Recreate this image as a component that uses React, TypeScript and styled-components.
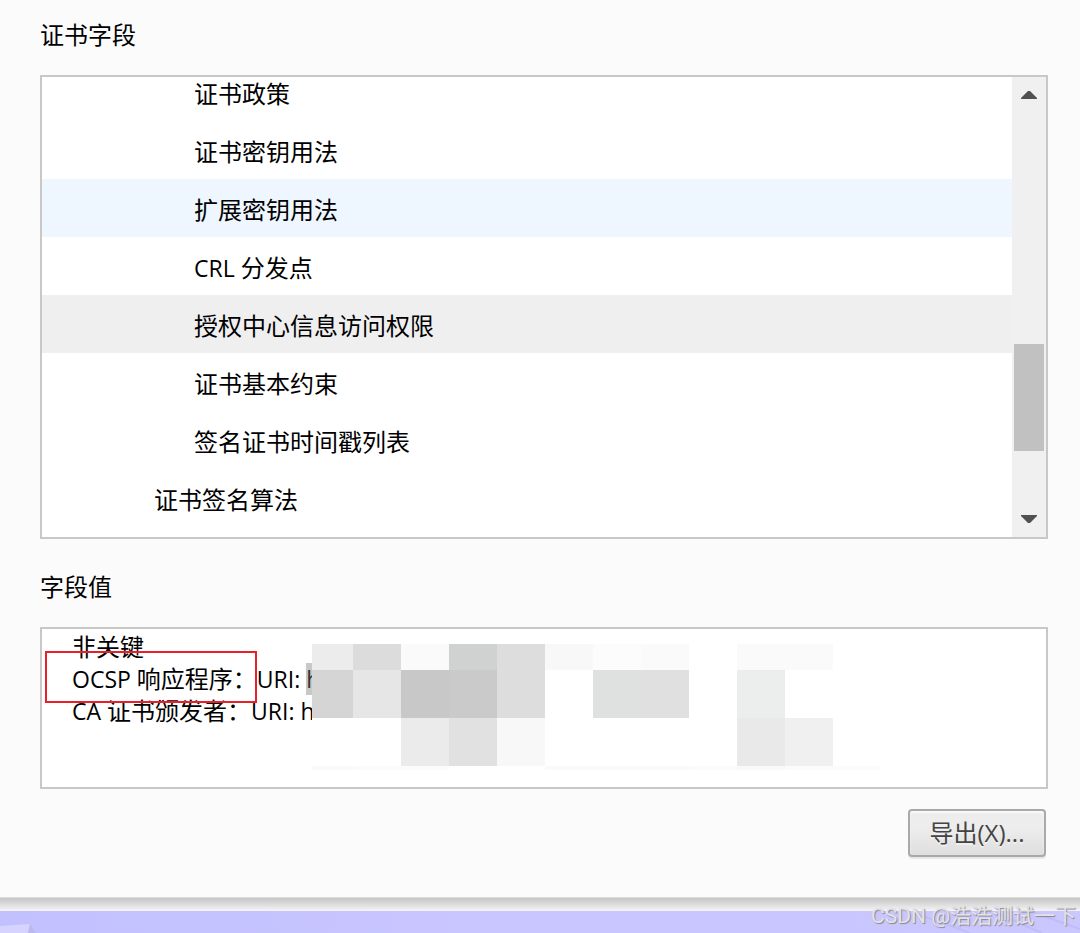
import React from 'react';
import styled, { createGlobalStyle } from 'styled-components';

const GlobalStyle = createGlobalStyle`
  *, *::before, *::after { box-sizing: border-box; }
  body {
    margin: 0;
    background: #c7c4fe;
    color: #000;
    font: 24px/32px "Open Sans", "Noto Sans CJK SC", sans-serif;
  }
`;

const Page = styled.div`
  min-height: 100vh;
  display: flex;
  flex-direction: column;
`;

const Panel = styled.main`
  display: flex;
  flex-direction: column;
  padding: 19px 32px 40px 40px;
  background: #fbfbfb;
  border-bottom: 1px solid #dcdddc;
`;

const Label = styled.label`
  display: block;
  line-height: 32px;
  margin-bottom: 24px;
`;

const Latin = styled.span`
  font-size: 23px;
  line-height: 1;
`;

const TreeFrame = styled.div`
  display: flex;
  height: 464px;
  margin-bottom: 32px;
  border: 2px solid #c8c8c8;
  background: #fff;
  overflow: hidden;
`;

const Tree = styled.ul`
  flex: 1;
  min-width: 0;
  margin: -14px 0 0;
  padding: 0;
  list-style: none;
`;

const toneColors = { plain: 'transparent', hover: '#eef6ff', selected: '#efefef' };

const TreeRow = styled.li<{ $depth: number; $tone: keyof typeof toneColors }>`
  height: 58px;
  line-height: 54px;
  padding-top: 4px;
  padding-left: ${({ $depth }) => $depth * 40 - 8}px;
  background: ${({ $tone }) => toneColors[$tone]};
`;

const Scrollbar = styled.div`
  display: flex;
  flex-direction: column;
  align-items: center;
  width: 34px;
  padding: 14px 0;
  background: #f0f0f0;
`;

const Arrow = styled.svg`
  display: block;
  width: 16px;
  height: 8px;
  fill: #505050;
`;

const Track = styled.div`
  flex: 1;
  width: 30px;
  padding-top: 245px;
`;

const Thumb = styled.div`
  height: 107px;
  background: #c1c1c1;
`;

const ValueFrame = styled.div`
  position: relative;
  height: 162px;
  padding: 2px 30px;
  border: 2px solid #c8c8c8;
  background: #fff;
  overflow: hidden;
`;

const Value = styled.output`
  display: block;
  white-space: pre;
`;

const Selected = styled.span`
  background: #c8c8c8;
  color: #333;
`;

const Mosaic = styled.div`
  position: absolute;
  left: 270px;
  top: 15px;
  display: grid;
  grid-template-columns: 41px repeat(11, 48px);
  grid-template-rows: 26px 48px 48px 4px;
`;

const Tile = styled.div<{ $color: string }>`
  background: ${({ $color }) => $color};
`;

const RedBox = styled.div`
  position: absolute;
  left: 3px;
  top: 22px;
  width: 212px;
  height: 52px;
  border: 2px solid #e8202a;
`;

const Actions = styled.div`
  display: flex;
  justify-content: flex-end;
  padding: 20px 2px 0;
`;

const ExportButton = styled.button`
  width: 138px;
  height: 48px;
  padding: 0;
  border: 2px solid #a9a9a9;
  border-radius: 4px;
  background: linear-gradient(#ededed 38%, #dedede);
  box-shadow: 0 2px 0 rgba(0, 0, 0, 0.08), inset 0 2px 2px rgba(255, 255, 255, 0.75);
  color: #444;
  font: inherit;
  text-shadow: 0 2px 0 #f0f0f0;
`;

const Shade = styled.div`
  height: 13px;
  background: linear-gradient(#c5c5c5, #f5f5f5);
`;

const Footer = styled.footer`
  flex: 1;
  position: relative;
  min-height: 22px;
  background: linear-gradient(90deg, #c2c0ff, #c9c6ff 50%, #cac7ff);
`;

const Artwork = styled.svg`
  display: block;
  width: 36px;
  height: 22px;
`;

const Streaks = styled.svg`
  position: absolute;
  right: 0;
  top: 0;
  width: 160px;
  height: 22px;
`;

const Watermark = styled.span`
  position: absolute;
  right: 4px;
  top: -9px;
  font: 21px/28px Roboto, "Noto Sans CJK SC", sans-serif;
  color: #e3e3e6;
  text-shadow: 1px 1px 1px #858590;
  white-space: nowrap;
`;

const fields: { name: string; prefix?: string; depth: number; tone?: keyof typeof toneColors }[] = [
  { name: '证书政策', depth: 4 },
  { name: '证书密钥用法', depth: 4 },
  { name: '扩展密钥用法', depth: 4, tone: 'hover' },
  { prefix: 'CRL ', name: '分发点', depth: 4 },
  { name: '授权中心信息访问权限', depth: 4, tone: 'selected' },
  { name: '证书基本约束', depth: 4 },
  { name: '签名证书时间戳列表', depth: 4 },
  { name: '证书签名算法', depth: 3 },
];

const tiles = [
  '#ececec', '#dcdcdc', '#fafafa', '#d0d2d1', '#dddddd', '#f8f8f8', '#fcfcfc', '#fafafa', '#fff', '#fafafa', '#fafafa', '#fff',
  '#d5d5d5', '#e6e6e6', '#c8c8c8', '#cacaca', '#dddddd', '#fff', '#dee1e0', '#e0e0e0', '#fff', '#eceeed', '#fff', '#fff',
  '#fff', '#fff', '#ebebeb', '#e1e1e1', '#f8f8f8', '#fff', '#fff', '#fff', '#fff', '#e9e9e9', '#f0f0f0', '#fff',
  '#fafafa', '#fbfbfb', '#fbfbfb', '#fff', '#fff', '#fafafa', '#fafafa', '#fafafa', '#fbfbfb', '#f9f9f9', '#fbfbfb', '#fbfbfb',
];

export default function App() {
  return (
    <Page>
      <GlobalStyle />
      <Panel>
        <Label as="div" id="fields-label">证书字段</Label>
        <TreeFrame>
          <Tree role="tree" aria-labelledby="fields-label">
            {fields.map(({ name, prefix, depth, tone = 'plain' }) => (
              <TreeRow
                key={name}
                role="treeitem"
                aria-selected={tone === 'selected'}
                $depth={depth}
                $tone={tone}
              >
                {prefix && <Latin>{prefix}</Latin>}
                {name}
              </TreeRow>
            ))}
          </Tree>
          <Scrollbar aria-hidden="true">
            <Arrow viewBox="0 0 16 8"><path d="M0 8V7L7 0h2l7 7v1z" /></Arrow>
            <Track><Thumb /></Track>
            <Arrow viewBox="0 0 16 8"><path d="M0 0h16v1L9 8H7L0 1z" /></Arrow>
          </Scrollbar>
        </TreeFrame>
        <Label htmlFor="field-value">字段值</Label>
        <ValueFrame>
          <Value id="field-value">
            {'非关键\n'}
            <Latin>{'OCSP '}</Latin>
            响应程序：
            <Latin>{'URI: '}<Selected>h</Selected></Latin>
            {'\n'}
            <Latin>{'CA '}</Latin>
            证书颁发者：
            <Latin>{'URI: h'}</Latin>
          </Value>
          <Mosaic aria-hidden="true">
            {tiles.map((color, i) => <Tile key={i} $color={color} />)}
          </Mosaic>
          <RedBox />
        </ValueFrame>
        <Actions>
          <ExportButton type="button">导出(X)...</ExportButton>
        </Actions>
      </Panel>
      <Shade />
      <Footer>
        <Artwork viewBox="0 0 36 22" aria-hidden="true">
          <path d="M0 15 30 13 28 22H0z" fill="#d6d3ff" />
          <path d="M30 13 36 22h-8z" fill="#bcb9f2" />
        </Artwork>
        <Streaks viewBox="0 0 160 22" aria-hidden="true">
          <path d="M0 4 50 22M72 0l50 22M110 0l50 18" stroke="#bfbcf8" strokeWidth="2" fill="none" />
        </Streaks>
        <Watermark>CSDN @浩浩测试一下</Watermark>
      </Footer>
    </Page>
  );
}
